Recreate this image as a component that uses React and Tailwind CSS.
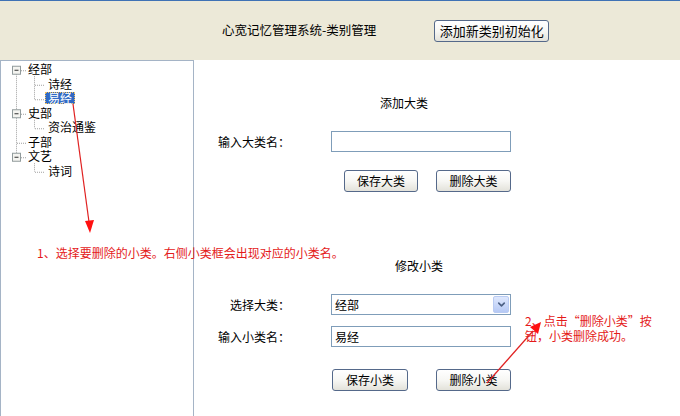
import { ChevronDown } from 'lucide-react';

const font = { fontFamily: '"Noto Sans CJK SC", "Noto Sans", sans-serif' };

// tree rows: label, level, selected
const treeRows = [
  { label: '经部', level: 0 },
  { label: '诗经', level: 1 },
  { label: '易经', level: 1, selected: true },
  { label: '史部', level: 0 },
  { label: '资治通鉴', level: 1 },
  { label: '子部', level: 0 },
  { label: '文艺', level: 0 },
  { label: '诗词', level: 1 },
];

function XpButton({ children, className = '' }) {
  return (
    <button
      className={`h-[22px] shrink-0 rounded-[3px] border border-[#55698a] bg-linear-to-b from-white via-[#f7f7f4] to-[#e3e2da] text-[12px] text-black leading-none ${className}`}
    >
      {children}
    </button>
  );
}

function TextBox({ value }) {
  return (
    <div className="ml-[41px] flex h-[21px] w-[180px] shrink-0 items-center border border-[#7f9db9] bg-white px-[3px] text-[12px]">
      {value}
    </div>
  );
}

function TreeLines() {
  // row centers relative to tree top
  const c = (i) => 9.25 + i * 14.5;
  const dot = { stroke: '#a0a0a0', strokeWidth: 1, strokeDasharray: '1 1' };
  const box = (i) => (
    <g key={i}>
      <rect x="11.5" y={c(i) - 4} width="8" height="8" fill="#f4f4f0" stroke="#919b9c" />
      <line x1="13.5" x2="17.5" y1={c(i)} y2={c(i)} stroke="#333" />
    </g>
  );
  return (
    <svg className="absolute left-0 top-0" width="120" height="130">
      <line x1="15.5" x2="15.5" y1={c(0) + 4} y2={c(3) - 4} style={dot} />
      <line x1="15.5" x2="15.5" y1={c(3) + 4} y2={c(6) - 4} style={dot} />
      <line x1="20" x2="25" y1={c(0) + 0.5} y2={c(0) + 0.5} style={dot} />
      <line x1="20" x2="25" y1={c(3) + 0.5} y2={c(3) + 0.5} style={dot} />
      <line x1="16" x2="25" y1={c(5) + 0.5} y2={c(5) + 0.5} style={dot} />
      <line x1="20" x2="25" y1={c(6) + 0.5} y2={c(6) + 0.5} style={dot} />
      <line x1="33.5" x2="33.5" y1={c(0) + 6} y2={c(2)} style={dot} />
      <line x1="34" x2="44" y1={c(1) + 0.5} y2={c(1) + 0.5} style={dot} />
      <line x1="34" x2="44" y1={c(2) + 0.5} y2={c(2) + 0.5} style={dot} />
      <line x1="33.5" x2="33.5" y1={c(3) + 6} y2={c(4)} style={dot} />
      <line x1="34" x2="44" y1={c(4) + 0.5} y2={c(4) + 0.5} style={dot} />
      <line x1="33.5" x2="33.5" y1={c(6) + 6} y2={c(7)} style={dot} />
      <line x1="34" x2="44" y1={c(7) + 0.5} y2={c(7) + 0.5} style={dot} />
      {[0, 3, 6].map(box)}
    </svg>
  );
}

export default function App() {
  return (
    <div className="relative h-[416px] w-[680px] overflow-hidden bg-white text-black" style={font}>
      {/* header */}
      <div className="flex h-[60px] items-center border-t border-[#3f72b5] bg-[#ece9d8]">
        <div className="pl-[222px] text-[12.5px]">心宽记忆管理系统-类别管理</div>
        <XpButton className="ml-[58px] w-[115px] text-[13px]">添加新类别初始化</XpButton>
      </div>

      <div className="flex h-[356px]">
        {/* tree panel */}
        <div className="w-[194px] shrink-0 border border-b-0 border-[#a5b4c6] bg-white">
          <div className="relative pt-[1px]">
            <TreeLines />
            {treeRows.map((r) => (
              <div
                key={r.label}
                className={`relative flex h-[14.5px] items-center text-[12px] leading-none ${r.level ? 'pl-[44px]' : 'pl-[24px]'}`}
              >
                <span
                  className={`flex h-[12px] items-center px-[2px] leading-none ${
                    r.selected ? 'border border-dotted border-[#f0c060] bg-[#316ac5] text-white' : 'border border-transparent'
                  }`}
                >
                  {r.label}
                </span>
              </div>
            ))}
          </div>
        </div>

        {/* form panel */}
        <div className="min-w-0 flex-1 pt-[35px] text-[12px]">
          <div className="w-[420px] text-center leading-4">添加大类</div>
          <div className="mt-[20px] flex items-center">
            <div className="w-[96px] shrink-0 text-right">输入大类名：</div>
            <TextBox value="" />
          </div>
          <div className="mt-[18px] flex">
            <XpButton className="ml-[150px] w-[74px]">保存大类</XpButton>
            <XpButton className="ml-[18px] w-[75px]">删除大类</XpButton>
          </div>

          <div className="mt-[66px] w-[450px] text-center leading-4">修改小类</div>
          <div className="mt-[20px] flex items-center">
            <div className="w-[96px] shrink-0 text-right">选择大类：</div>
            <div className="ml-[41px] flex h-[21px] w-[180px] shrink-0 items-center justify-between border border-[#7f9db9] bg-white pl-[3px] pr-[1px]">
              <span>经部</span>
              <span className="flex h-[17px] w-[16px] items-center justify-center rounded-[2px] border border-[#b9cbf3] bg-linear-to-b from-[#dfe8fd] to-[#b6c9f5]">
                <ChevronDown className="h-[11px] w-[11px] text-[#4d6185]" strokeWidth={3.5} />
              </span>
            </div>
          </div>
          <div className="mt-[11px] flex items-center">
            <div className="w-[96px] shrink-0 text-right">输入小类名：</div>
            <TextBox value="易经" />
          </div>
          <div className="mt-[22px] flex">
            <XpButton className="ml-[138px] w-[76px]">保存小类</XpButton>
            <XpButton className="ml-[28px] w-[75px]">删除小类</XpButton>
          </div>
        </div>
      </div>

      {/* annotations */}
      <div className="absolute left-[37px] top-[245px] text-[12px] leading-4 text-[#e41b1b]">
        1、选择要删除的小类。右侧小类框会出现对应的小类名。
      </div>
      <div className="absolute left-[525px] top-[313px] w-[140px] text-[12px] leading-[15px] text-[#e41b1b]">
        2、点击“删除小类”按钮，小类删除成功。
      </div>
      <svg className="pointer-events-none absolute left-0 top-0" width="680" height="416">
        <line x1="73" y1="104" x2="89" y2="222" stroke="#e02020" strokeWidth="1.2" />
        <polygon points="85,221 94,220 90,233" fill="#ff1010" />
        <line x1="487" y1="383" x2="533" y2="331" stroke="#e02020" strokeWidth="1.2" />
        <polygon points="530,327 538,334 541,322" fill="#ff1010" />
      </svg>
    </div>
  );
}
